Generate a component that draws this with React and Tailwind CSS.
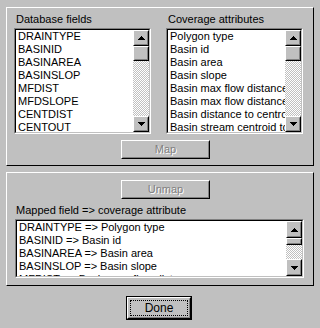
import React from "react";

function Tri({ up }) {
  return (
    <svg width="7" height="4" viewBox="0 0 7 4" shapeRendering="crispEdges">
      {up ? (
        <path d="M3 0h1v1H3zM2 1h3v1H2zM1 2h5v1H1zM0 3h7v1H0z" fill="#000" />
      ) : (
        <path d="M0 0h7v1H0zM1 1h5v1H1zM2 2h3v1H2zM3 3h1v1H3z" fill="#000" />
      )}
    </svg>
  );
}

function Raised({ className = "", children }) {
  return (
    <div className={"border border-t-white border-l-white border-r-black border-b-black bg-[#c0c0c0] " + className}>
      <div className="w-full h-full border border-t-[#c0c0c0] border-l-[#c0c0c0] border-r-[#808080] border-b-[#808080] flex items-center justify-center">
        {children}
      </div>
    </div>
  );
}

function Scrollbar() {
  return (
    <div className="flex flex-col w-[16px] h-full shrink-0">
      <Raised className="h-[16px] w-[16px] shrink-0">
        <Tri up />
      </Raised>
      <Raised className="h-[15px] w-[16px] shrink-0" />
      <div className="flex-1 bg-[repeating-conic-gradient(#c0c0c0_0_25%,#fff_0_50%)] bg-[length:2px_2px]" />
      <Raised className="h-[16px] w-[16px] shrink-0">
        <Tri />
      </Raised>
    </div>
  );
}

function SmallScrollbar() {
  return (
    <div className="flex flex-col w-[16px] h-full shrink-0">
      <Raised className="h-[17px] w-[16px] shrink-0">
        <Tri up />
      </Raised>
      <Raised className="h-[7px] w-[16px] shrink-0" />
      <div className="flex-1 bg-[repeating-conic-gradient(#c0c0c0_0_25%,#fff_0_50%)] bg-[length:2px_2px]" />
      <Raised className="h-[17px] w-[16px] shrink-0">
        <Tri />
      </Raised>
    </div>
  );
}

function ListBox({ items, className = "", small }) {
  return (
    <div className={"border border-t-[#808080] border-l-[#808080] border-r-white border-b-white " + className}>
      <div className="w-full h-full border border-t-black border-l-black border-r-[#c0c0c0] border-b-[#c0c0c0] flex bg-white">
        <div className="flex-1 overflow-hidden pl-[2px]">
          {items.map((t, i) => (
            <div key={i} className="h-[13px] whitespace-nowrap">
              {t}
            </div>
          ))}
        </div>
        {small ? <SmallScrollbar /> : <Scrollbar />}
      </div>
    </div>
  );
}

function Button({ label, className = "" }) {
  return (
    <Raised className={className}>
      <span className="text-[#808080] [text-shadow:1px_1px_0_#fff]">{label}</span>
    </Raised>
  );
}

export default function App() {
  const list1 = ["DRAINTYPE", "BASINID", "BASINAREA", "BASINSLOP", "MFDIST", "MFDSLOPE", "CENTDIST", "CENTOUT"];
  const list2 = [
    "Polygon type",
    "Basin id",
    "Basin area",
    "Basin slope",
    "Basin max flow distance",
    "Basin max flow distance slope",
    "Basin distance to centroid",
    "Basin stream centroid to outlet",
  ];
  const list3 = [
    "DRAINTYPE => Polygon type",
    "BASINID => Basin id",
    "BASINAREA => Basin area",
    "BASINSLOP => Basin slope",
    "MFDIST => Basin max flow distance",
  ];
  return (
    <div className="w-[320px] h-[328px] bg-[#c0c0c0] pt-[7px] pl-[6px] text-[11px] leading-[13px] text-black font-['Liberation_Sans',Arial,sans-serif] flex flex-col">
      <div className="w-[308px] h-[159px] border border-t-white border-l-white border-r-black border-b-black flex flex-col pt-[5px] pl-[7px]">
        <div className="flex gap-[15px]">
          <div className="flex flex-col w-[137px]">
            <div className="pl-[2px] h-[13px] mb-[2px]">Database fields</div>
            <ListBox items={list1} className="h-[106px] w-[137px]" />
          </div>
          <div className="flex flex-col w-[137px]">
            <div className="pl-[2px] h-[13px] mb-[2px]">Coverage attributes</div>
            <ListBox items={list2} className="h-[106px] w-[137px]" />
          </div>
        </div>
        <Button label="Map" className="mt-[6px] ml-[107px] w-[89px] h-[19px]" />
      </div>
      <div className="mt-[6px] w-[308px] h-[114px] border border-t-white border-l-white border-r-black border-b-black flex flex-col pt-[7px] pl-[8px]">
        <Button label="Unmap" className="ml-[106px] w-[89px] h-[19px]" />
        <div className="mt-[5px] pl-[1px] h-[13px] mb-[2px]">Mapped field =&gt; coverage attribute</div>
        <ListBox items={list3} small className="h-[59px] w-[289px]" />
      </div>
      <div className="mt-[10px] ml-[120px] w-[66px] h-[24px] border border-black">
        <div className="w-full h-full border border-t-white border-l-white border-r-black border-b-black">
          <div className="w-full h-full border border-t-[#c0c0c0] border-l-[#c0c0c0] border-r-[#808080] border-b-[#808080] p-[1px]">
            <div className="w-full h-full border border-dotted border-black flex items-center justify-center text-[12px]">
              Done
            </div>
          </div>
        </div>
      </div>
    </div>
  );
}
